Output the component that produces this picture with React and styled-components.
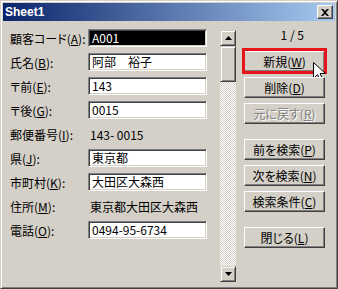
import React from "react";
import styled, { createGlobalStyle } from "styled-components";

const GlobalStyle = createGlobalStyle`
	html, body {
		margin: 0;
		padding: 0;
		background: #d4d0c8;
	}
	body {
		font-family: "Noto Sans CJK JP", "Liberation Sans", sans-serif;
		font-size: 12px;
		color: #000;
	}
`;

const fields = [
	{ label: "顧客コード", key: "A", value: "A001", selected: true },
	{ label: "氏名", key: "B", value: "阿部　裕子" },
	{ label: "〒前", key: "E", value: "143" },
	{ label: "〒後", key: "G", value: "0015" },
	{ label: "郵便番号", key: "I", value: "143- 0015", fixed: true },
	{ label: "県", key: "J", value: "東京都" },
	{ label: "市町村", key: "K", value: "大田区大森西" },
	{ label: "住所", key: "M", value: "東京都大田区大森西", fixed: true },
	{ label: "電話", key: "O", value: "0494-95-6734" },
];

const buttons = [
	{ label: "新規", key: "W", focus: true },
	{ label: "削除", key: "D" },
	{ label: "元に戻す", key: "R", disabled: true },
	{ label: "前を検索", key: "P", spaced: true },
	{ label: "次を検索", key: "N" },
	{ label: "検索条件", key: "C" },
	{ label: "閉じる", key: "L", spaced: true },
];

export default function App() {
	return (
		<>
			<GlobalStyle />
			<Window>
				<TitleBar>
					<Title>Sheet1</Title>
					<CloseButton>
						<svg width="8" height="7" viewBox="0 0 8 7">
							<path d="M0 0h2l2 2 2-2h2L5 3.5 8 7H6L4 5 2 7H0l3-3.5z" fill="#000" />
						</svg>
					</CloseButton>
				</TitleBar>
				<Body>
					<Form>
						{fields.map(f => (
							<Row key={f.key}>
								<Label>
									{f.label}(<u>{f.key}</u>):
								</Label>
								{f.fixed ? (
									<Static>{f.value}</Static>
								) : (
									<Field $selected={f.selected}>{f.value}</Field>
								)}
							</Row>
						))}
					</Form>
					<ScrollBar>
						<ArrowButton>
							<svg width="7" height="4" viewBox="0 0 7 4">
								<path d="M3.5 0L7 4H0z" fill="#000" />
							</svg>
						</ArrowButton>
						<Thumb />
						<Track />
						<ArrowButton>
							<svg width="7" height="4" viewBox="0 0 7 4">
								<path d="M0 0h7L3.5 4z" fill="#000" />
							</svg>
						</ArrowButton>
					</ScrollBar>
					<Actions>
						<Counter>1 / 5</Counter>
						{buttons.map(b => (
							<ButtonSlot key={b.key} $spaced={b.spaced}>
								<Button $disabled={b.disabled}>
									{b.label}(<u>{b.key}</u>)
								</Button>
								{b.focus && (
									<>
										<Highlight />
										<Cursor width="13" height="21" viewBox="0 0 13 21">
											<path
												d="M0.5 0.5v16l4-4 3.5 7.5 2.5-1.2-3.5-7.3h5.5z"
												fill="#fff"
												stroke="#000"
												strokeWidth="1"
											/>
										</Cursor>
									</>
								)}
							</ButtonSlot>
						))}
					</Actions>
				</Body>
			</Window>
		</>
	);
}

const Window = styled.div`
	position: relative;
	width: 338px;
	height: 289px;
	box-sizing: border-box;
	background: #d4d0c8;
	border: 1px solid;
	border-color: #d4d0c8 #404040 #404040 #d4d0c8;
	box-shadow: inset 1px 1px #fff, inset -1px -1px #808080;
	padding: 2px;
	display: flex;
	flex-direction: column;
`;

const TitleBar = styled.div`
	height: 18px;
	flex: none;
	display: flex;
	align-items: center;
	justify-content: space-between;
	padding: 0 2px 0 2px;
	background: linear-gradient(to right, #0a246a, #a6caf0);
`;

const Title = styled.span`
	font-family: "Liberation Sans", Arial, sans-serif;
	font-weight: bold;
	font-size: 12px;
	color: #fff;
	padding-left: 0;
`;

const CloseButton = styled.div`
	width: 16px;
	height: 14px;
	box-sizing: border-box;
	display: flex;
	align-items: center;
	justify-content: center;
	background: #d4d0c8;
	border: 1px solid;
	border-color: #fff #404040 #404040 #fff;
	box-shadow: inset -1px -1px #808080;
`;

const Body = styled.div`
	flex: 1;
	display: flex;
	padding: 0 0 4px 7px;
`;

const Form = styled.div`
	width: 197px;
	padding-top: 5px;
	display: flex;
	flex-direction: column;
`;

const Row = styled.div`
	height: 24px;
	display: flex;
	align-items: center;
`;

const Label = styled.span`
	width: 78px;
	flex: none;
	white-space: nowrap;
	font-feature-settings: "palt";
	u {
		text-underline-offset: 1px;
	}
`;

const Field = styled.div`
	flex: 1;
	height: 18px;
	box-sizing: border-box;
	border: 1px solid;
	border-color: #808080 #fff #fff #808080;
	box-shadow: inset 1px 1px #404040, inset -1px -1px #d4d0c8;
	padding: 0 3px;
	line-height: 16px;
	white-space: nowrap;
	overflow: hidden;
	background: ${p => (p.$selected ? "#000" : "#fff")};
	color: ${p => (p.$selected ? "#fff" : "#000")};
`;

const Static = styled.div`
	flex: 1;
	padding-left: 2px;
	white-space: nowrap;
`;

const ScrollBar = styled.div`
	width: 16px;
	margin: 9px 0 0 13px;
	display: flex;
	flex-direction: column;
`;

const ArrowButton = styled.div`
	width: 16px;
	height: 16px;
	flex: none;
	box-sizing: border-box;
	display: flex;
	align-items: center;
	justify-content: center;
	background: #d4d0c8;
	border: 1px solid;
	border-color: #d4d0c8 #404040 #404040 #d4d0c8;
	box-shadow: inset 1px 1px #fff, inset -1px -1px #808080;
`;

const Thumb = styled(ArrowButton)`
	height: 36px;
`;

const Track = styled.div`
	flex: 1;
	background: repeating-conic-gradient(#fff 0 25%, #d4d0c8 0 50%) 0 0 / 2px 2px;
`;

const Actions = styled.div`
	width: 81px;
	margin-left: 8px;
	padding-top: 7px;
	display: flex;
	flex-direction: column;
`;

const Counter = styled.div`
	height: 14px;
	line-height: 14px;
	margin-bottom: 4px;
	text-align: right;
	padding-right: 21px;
	font-family: "Noto Sans CJK JP", sans-serif;
`;

const ButtonSlot = styled.div`
	position: relative;
	margin-top: ${p => (p.$spaced ? "15px" : "5px")};
	&:first-of-type {
		margin-top: 0;
	}
`;

const Button = styled.div`
	height: 21px;
	box-sizing: border-box;
	display: flex;
	align-items: center;
	justify-content: center;
	background: #d4d0c8;
	border: 1px solid;
	border-color: #fff #404040 #404040 #fff;
	box-shadow: inset -1px -1px #808080;
	white-space: nowrap;
	font-feature-settings: "palt";
	color: ${p => (p.$disabled ? "#808080" : "#000")};
	text-shadow: ${p => (p.$disabled ? "1px 1px #fff" : "none")};
`;

const Highlight = styled.div`
	position: absolute;
	top: -3px;
	left: -2px;
	right: -2px;
	bottom: -2px;
	border: 3px solid #e8141c;
`;

const Cursor = styled.svg`
	position: absolute;
	left: 69px;
	top: 11px;
`;
